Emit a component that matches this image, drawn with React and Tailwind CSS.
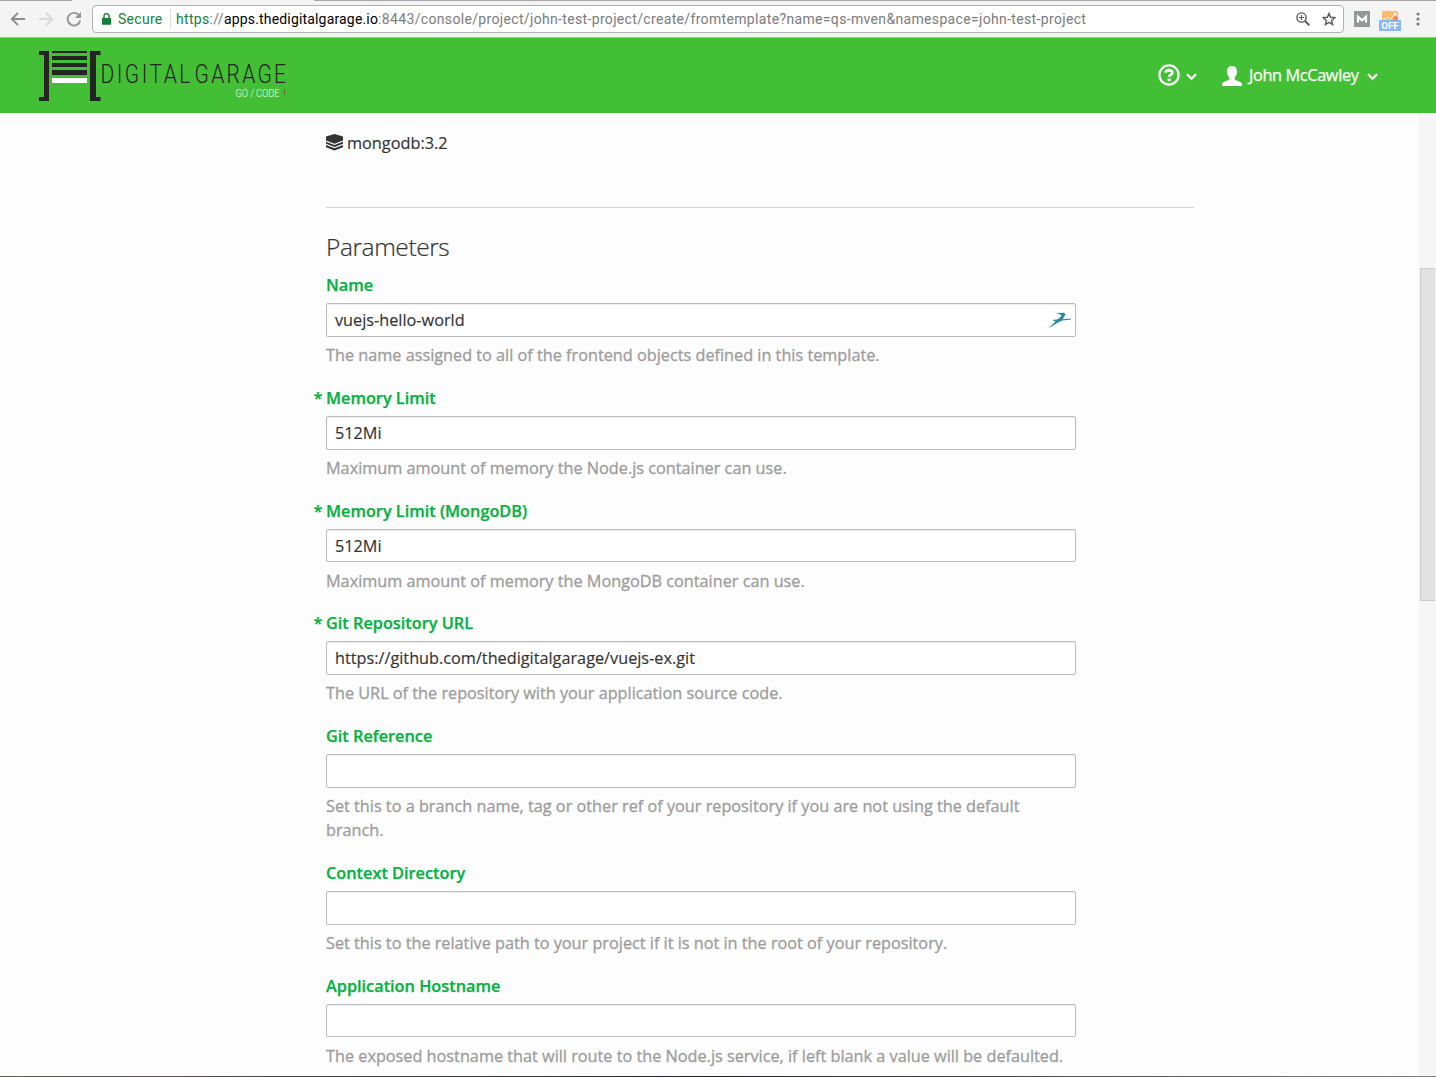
import React from "react";

const FIELDS = [
  { label: "Name", value: "vuejs-hello-world", help: "The name assigned to all of the frontend objects defined in this template.", bird: true },
  { label: "Memory Limit", required: true, value: "512Mi", help: "Maximum amount of memory the Node.js container can use." },
  { label: "Memory Limit (MongoDB)", required: true, value: "512Mi", help: "Maximum amount of memory the MongoDB container can use." },
  { label: "Git Repository URL", required: true, value: "https://github.com/thedigitalgarage/vuejs-ex.git", help: "The URL of the repository with your application source code." },
  { label: "Git Reference", value: "", help: "Set this to a branch name, tag or other ref of your repository if you are not using the default branch." },
  { label: "Context Directory", value: "", help: "Set this to the relative path to your project if it is not in the root of your repository." },
  { label: "Application Hostname", value: "", help: "The exposed hostname that will route to the Node.js service, if left blank a value will be defaulted." },
];

function Chevron() {
  return (
    <svg width="11" height="8" viewBox="0 0 11 8" fill="none" stroke="#fff" strokeWidth="2.2">
      <path d="M1 1.3 5.5 5.8 10 1.3" />
    </svg>
  );
}

function BrowserBar() {
  return (
    <div className="flex h-[38px] shrink-0 flex-col border-b border-[#b5b3b5] bg-[#f5f4f5] font-['Roboto',sans-serif] text-[14px]">
      <div className="flex h-px justify-between bg-[#f5f4f5]">
        <div className="w-[72px] bg-[#a9a7a9]" />
        <div className="w-[1122px] bg-[#a9a7a9]" />
      </div>
      <div className="flex h-9 items-center">
        <svg className="ml-[10px] shrink-0" width="16" height="16" viewBox="0 0 16 16" fill="none" stroke="#8b8b8b" strokeWidth="1.9">
          <path d="M15 8H2M8 1.8 1.8 8 8 14.2" />
        </svg>
        <svg className="ml-[12px] shrink-0" width="16" height="16" viewBox="0 0 16 16" fill="none" stroke="#dad9da" strokeWidth="1.9">
          <path d="M1 8h13M8 1.8 14.2 8 8 14.2" />
        </svg>
        <svg className="ml-[12px] shrink-0" width="16" height="16" viewBox="0 0 16 16" fill="none" stroke="#969696" strokeWidth="1.9">
          <path d="M13.2 4.6A6.3 6.3 0 1 0 14.2 9.5" />
          <path d="M15 1v6H9z" fill="#969696" stroke="none" />
        </svg>
        <div className="ml-[10px] flex h-[28px] w-[1252px] shrink-0 items-center rounded-[4px] border border-[#b3b1b3] bg-white">
          <svg className="ml-[9px]" width="9" height="12" viewBox="0 0 9 12">
            <path d="M0 5h9v6.2q0 .6-.6.6H.6q-.6 0-.6-.6z" fill="#15803d" />
            <path d="M2 5.500V3a2.500 2.400 0 0 1 5 0v2.500" fill="none" stroke="#15803d" strokeWidth="1.4" />
          </svg>
          <span className="ml-[7px] w-[45px] whitespace-nowrap tracking-[0.280px] text-[#15803d]">Secure</span>
          <div className="ml-[7px] h-[20px] w-px bg-[#dcdcdc]" />
          <span className="ml-[5px] w-[920px] whitespace-nowrap tracking-[0.316px] text-[#7b7b7b]">
            <span className="text-[#15803d]">https</span>://<span className="tracking-[0.170px] text-black">apps.thedigitalgarage.io</span><span className="tracking-[0.340px]">:8443/console/project/john-test-project/create/fromtemplate?name=qs-mven&amp;namespace=john-test-project</span>
          </span>
          <svg className="ml-auto shrink-0" width="14" height="14" viewBox="0 0 14 14" fill="none" stroke="#5b5b5b" strokeWidth="1.4">
            <circle cx="5.5" cy="5.5" r="4.6" />
            <path d="M9 9l4.3 4.3" strokeWidth="2" />
            <path d="M3 5.5h5M5.5 3v5" strokeWidth="1.1" />
          </svg>
          <svg className="mr-[7px] ml-[12px] shrink-0" width="14" height="14" viewBox="0 0 14 14" fill="none" stroke="#5b5b5b" strokeWidth="1.4">
            <path d="M7 1.4l1.6 3.9 4.2.4-3.2 2.7 1 4.1L7 10.3l-3.6 2.2 1-4.1L1.2 5.7l4.2-.4z" />
          </svg>
        </div>
        <svg className="ml-[10px] shrink-0" width="16" height="16" viewBox="0 0 16 16">
          <path d="M0 0h16v16H0z" fill="#929898" />
          <path d="M4 11.6V5.6L8 9.200l4-3.600v6" fill="none" stroke="#fff" strokeWidth="2.2" />
        </svg>
        <svg className="ml-[9px] mt-[4px] shrink-0" width="22" height="20" viewBox="0 0 22 20">
          <path d="M4.500 0h13q1.500 0 1.500 1.500V9H3V1.500Q3 0 4.500 0z" fill="#fabd6e" />
          <path d="M4 9l4.500-2.500L12 8l4-5" stroke="#fdeee0" fill="none" strokeWidth="1" />
          <circle cx="16" cy="3" r="1.500" fill="#fff" />
          <path d="M14 9q0-4 2.500-4T19 9z" fill="#f58568" />
          <path d="M0 9h22v11H0z" fill="#88b8f4" />
          <text x="11" y="18" textAnchor="middle" fontFamily="Roboto, sans-serif" fontWeight="700" fontSize="9.800" fill="#fff">OFF</text>
        </svg>
        <svg className="ml-[15px] shrink-0" width="4" height="14" viewBox="0 0 4 14" fill="#7b7b7b">
          <circle cx="2" cy="2" r="1.600" /><circle cx="2" cy="7" r="1.600" /><circle cx="2" cy="12" r="1.600" />
        </svg>
      </div>
    </div>
  );
}

function Logo() {
  return (
    <svg className="ml-[39px]" width="248" height="50" viewBox="0 0 248 50">
      <g fill="#262324">
        <path d="M0 0h10v50H0v-4h5V4H0zM51 0h10.500v4H57v42h4.500v4H51z" />
        <path d="M13 0h35v2H13zM13 5h35v4H13zM13 12h35v4H13zM13 19h35v5H13z" />
      </g>
      <path d="M13 27h35v5H13z" fill="#fff" />
      <g fontFamily="Roboto, sans-serif" fontWeight="300" fill="#262324" fontSize="25">
        <text transform="translate(61.500 32.300) scale(.84 1)" textLength="107" lengthAdjust="spacing">DIGITAL</text>
        <text transform="translate(155.500 32.300) scale(.84 1)" textLength="109" lengthAdjust="spacing">GARAGE</text>
      </g>
      <text transform="translate(196.500 46) scale(.8 1)" textLength="55" fontFamily="Roboto, sans-serif" fontWeight="300" fontSize="11.500" fill="#f3faf2">GO / CODE</text>
      <path d="M245 37.500h1v6h-1z" fill="#6a6a25" />
    </svg>
  );
}

function Header() {
  return (
    <header className="flex h-[75px] shrink-0 items-center bg-[#43bf36] text-white">
      <Logo />
      <div className="mr-[58px] ml-auto flex items-center">
        <svg className="-mt-[2px]" width="22" height="22" viewBox="0 0 22 22" fill="none" stroke="#fff">
          <circle cx="11" cy="11" r="9.600" strokeWidth="2.300" />
          <path d="M7.600 8.600C8 5.400 14.300 5.500 14.300 8.700c0 2.200-3.200 2.200-3.200 4.400" strokeWidth="2.800" />
          <path d="M9.600 14.500h3v2.600h-3z" fill="#fff" stroke="none" />
        </svg>
        <div className="mt-[3px] ml-[6px]"><Chevron /></div>
        <svg className="ml-[25px]" width="20" height="20" viewBox="0 0 20 20" fill="#fff">
          <path d="M10 0c3.200 0 5 2.200 5 5.400 0 2.700-1 4.600-2.300 6v1.800c0 1 6 2 7 4.300.3.700.3 1.600.3 2.500H0c0-.9 0-1.800.3-2.500 1-2.300 7-3.300 7-4.300v-1.800C6 10 5 8.100 5 5.400 5 2.200 6.800 0 10 0z" />
        </svg>
        <span className="ml-[7px] w-[111px] whitespace-nowrap text-[16.300px] tracking-[-0.360px] [-webkit-text-stroke:0.25px]">John McCawley</span>
        <div className="mt-[3px] ml-[7px]"><Chevron /></div>
      </div>
    </header>
  );
}

function Field({ label, required, value, help, bird }) {
  return (
    <div className="mb-[18.470px] w-[750px]">
      <div className="flex h-[24.500px] items-center text-[16.290px] font-semibold text-[#05b13e] [-webkit-text-stroke:0.25px]">
        {required && <span className="-ml-[12.500px] w-[12.500px]">*</span>}
        <span>{label}</span>
      </div>
      <div className="mt-[5.500px] flex h-[33.600px] items-center justify-between rounded-[2px] border border-[#bbb] bg-white px-[8px] text-[16.260px] text-[#333] shadow-[inset_0_1px_1px_rgba(0,0,0,0.075)] [-webkit-text-stroke:0.15px]">
        <span className="pt-[0.500px]">{value}</span>
        {bird && (
          <svg className="-mr-[5px]" width="24" height="18" viewBox="0 0 24 18" fill="#278ba0">
            <path d="M.300 17.500 7.500 10.500 4 9l6-.800L13.500 5 12.500 3.500 8 2l8-.300 1.500 1.500-2 3.500-.500 1.500 8.500-.700L22 8.800l-7.500.700-4.500 2z" />
          </svg>
        )}
      </div>
      <p className="mt-[6.200px] text-[16.260px] leading-[24.400px] tracking-[-0.002px] text-[#9c9c9c] [-webkit-text-stroke:0.3px]">{help}</p>
    </div>
  );
}

export default function App() {
  return (
    <div className="flex h-[1077px] w-[1436px] flex-col overflow-hidden bg-[#fdfdfd] font-['Open_Sans',sans-serif]">
      <BrowserBar />
      <Header />
      <div className="flex h-[963px] shrink-0 overflow-hidden">
        <main className="h-[963px] flex-1 overflow-hidden pl-[326px]">
          <div className="mt-[18px] flex h-[24px] items-center text-[16.300px] text-[#333] [-webkit-text-stroke:0.15px]">
            <svg className="mr-[4px] -mt-px" width="17" height="17" viewBox="0 0 17 17" fill="#333">
              <path d="M8.500 0 17 2.600v4L8.500 9.800 0 6.600v-4z" />
              <path d="M0 7.800 8.500 11l8.500-3.200v2L8.500 13 0 9.800zM0 11l8.500 3.200L17 11v2.300L8.500 16.600 0 13.300z" />
            </svg>
            <span>mongodb:3.2</span>
          </div>
          <hr className="mt-[52px] w-[868px] border-t border-[#d3d3d3]" />
          <h2 className="mt-[23px] mb-[10.450px] h-[32px] text-[24.500px] leading-[32px] font-light tracking-[-0.420px] text-[#333] [-webkit-text-stroke:0.2px]">Parameters</h2>
          {FIELDS.map((f) => <Field key={f.label} {...f} />)}
        </main>
        <div className="w-[17px] bg-[#f6f6f6] pt-[155px]">
          <div className="ml-px h-[333px] w-[15px] border border-r-0 border-[#cbcbcb] bg-[#e2e2e2]" />
        </div>
      </div>
      <div className="h-px shrink-0 bg-gradient-to-r from-[#655d59] via-[#24232a] to-[#85817e]" />
    </div>
  );
}
